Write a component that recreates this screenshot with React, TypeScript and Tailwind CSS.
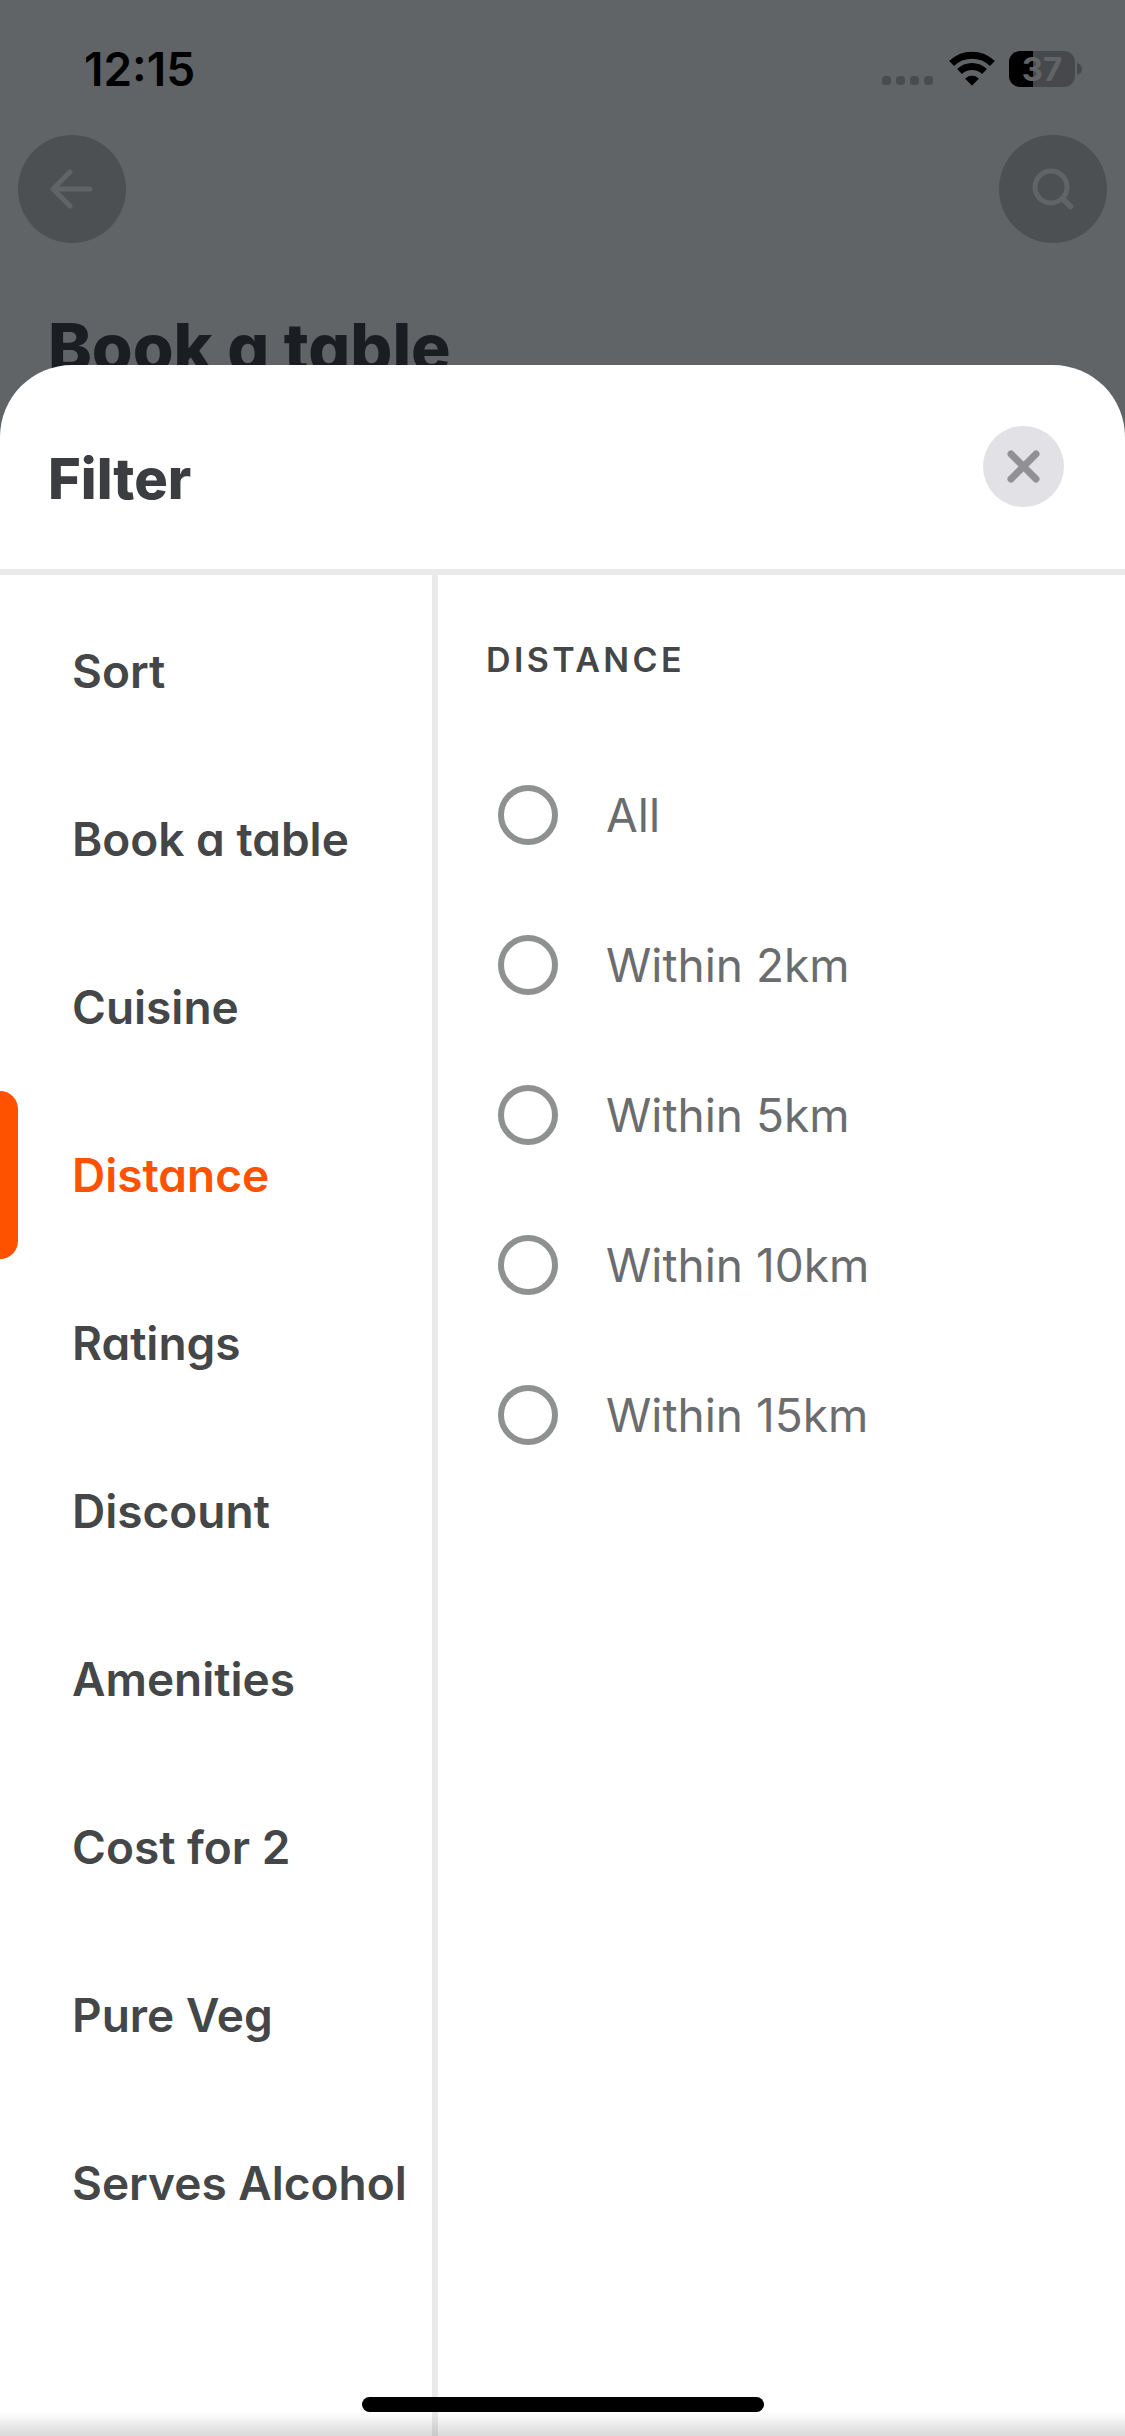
import { useState } from "react"
import clsx from "clsx"

const categories = [
  "Sort",
  "Book a table",
  "Cuisine",
  "Distance",
  "Ratings",
  "Discount",
  "Amenities",
  "Cost for 2",
  "Pure Veg",
  "Serves Alcohol",
]

const distances = ["All", "Within 2km", "Within 5km", "Within 10km", "Within 15km"]

const StatusBar = () => (
  <div className="flex items-start justify-between pt-10 pr-[43px] pl-[84px] text-black">
    <span className="text-[46px] leading-[58px] font-semibold">12:15</span>
    <div className="flex items-center pt-[11px]">
      <svg width="52" height="36" viewBox="0 0 52 36" fill="#494c4f" className="mr-[15px]">
        <rect x="0" y="25" width="9" height="9" rx="3.5" />
        <rect x="14" y="25" width="9" height="9" rx="3.5" />
        <rect x="28" y="25" width="9" height="9" rx="3.5" />
        <rect x="42" y="25" width="9" height="9" rx="3.5" />
      </svg>
      <svg width="46" height="36" viewBox="0 0 46 36" className="mr-[14px]">
        <g fill="none" stroke="#000" strokeWidth="7">
          <path d="M2.6 12.6a29 29 0 0 1 40.8 0" />
          <path d="M10.5 20.6a17.8 17.8 0 0 1 25 0" />
        </g>
        <path d="M23 34.2l-6.4-6.5a9.2 9.2 0 0 1 12.8 0z" stroke="#000" strokeWidth="1" strokeLinejoin="round" />
      </svg>
      <div className="mr-[2px] flex h-9 w-[66px] items-center justify-center rounded-[11px] bg-linear-to-r from-black from-36% to-[#47484b] to-36%">
        <span className="text-[33px] leading-9 font-bold text-[#606467]">37</span>
      </div>
      <svg width="5" height="12" viewBox="0 0 5 12" fill="#47484b">
        <path d="M0 0c3 1 5 3.200 5 6s-2 5-5 6z" />
      </svg>
    </div>
  </div>
)

const App = () => {
  const [active, setActive] = useState("Distance")
  const [distance, setDistance] = useState("")

  return (
    <main className="flex min-h-screen w-full flex-col bg-[#606467] font-[Inter,'Liberation_Sans',sans-serif] [font-feature-settings:'cv11']">
      <header>
        <StatusBar />
        <nav className="mt-[37px] flex justify-between px-[18px]">
          <button
            aria-label="Back"
            className="flex size-[108px] items-center justify-center rounded-full bg-[#4c5053]"
          >
            <svg width="44" height="42" viewBox="0 0 44 42" fill="none" stroke="#606467" strokeWidth="5" strokeLinecap="round" strokeLinejoin="round">
              <path d="M40 21H4M20 4L3 21l17 17" />
            </svg>
          </button>
          <button
            aria-label="Search"
            className="flex size-[108px] items-center justify-center rounded-full bg-[#4c5053]"
          >
            <svg width="42" height="42" viewBox="0 0 42 42" fill="none" stroke="#606467" strokeWidth="5" strokeLinecap="round">
              <circle cx="19" cy="19" r="16" />
              <path d="M31 31l7.500 7.500" strokeWidth="6" />
            </svg>
          </button>
        </nav>
        <h1 className="mt-[66px] px-12 text-[66px] leading-[76px] font-extrabold text-[#1a1e22]">
          Book a table
        </h1>
      </header>

      <section className="relative -mt-5 flex grow flex-col rounded-t-[72px] bg-white">
        <div className="flex items-start justify-between border-b-[6px] border-[#eaeaea] px-[61px] pt-[61px] pb-[55px] pl-12">
          <h2 className="pt-[18px] text-[56px] leading-[70px] font-extrabold text-[#3b3d40]">Filter</h2>
          <button
            aria-label="Close"
            className="flex size-[81px] items-center justify-center rounded-full bg-[#e2e2e6]"
          >
            <svg width="33" height="33" viewBox="0 0 33 33" stroke="#909095" strokeWidth="7" strokeLinecap="round">
              <path d="M4 4l25 25M29 4L4 29" />
            </svg>
          </button>
        </div>

        <div className="flex grow">
          <div className="flex w-[438px] shrink-0 flex-col border-r-[6px] border-[#eaeaea] pt-3">
            {categories.map((item) => (
              <button
                key={item}
                onClick={() => setActive(item)}
                className={clsx(
                  "flex h-[168px] items-center text-left text-[46px] leading-[56px] font-semibold whitespace-nowrap",
                  item === active ? "text-[#ff5200]" : "text-[#444648]"
                )}
              >
                <span
                  className={clsx(
                    "mr-[54px] h-full w-[18px] rounded-r-[18px]",
                    item === active && "bg-[#ff5200]"
                  )}
                />
                {item}
              </button>
            ))}
          </div>

          <fieldset className="grow pt-16 pl-12">
            <legend className="float-left w-full text-[34px] leading-[42px] font-semibold tracking-widest text-[#444648]">
              DISTANCE
            </legend>
            <div className="clear-both flex flex-col pt-[59px]">
              {distances.map((item) => (
                <label
                  key={item}
                  className="flex h-[150px] items-center gap-12 pl-3 text-[46px] leading-[56px] text-[#6b6c6e]"
                >
                  <input
                    type="radio"
                    name="distance"
                    value={item}
                    checked={distance === item}
                    onChange={() => setDistance(item)}
                    className="size-[60px] appearance-none rounded-full border-[6px] border-[#8f9090] checked:border-[18px] checked:border-[#ff5200]"
                  />
                  {item}
                </label>
              ))}
            </div>
          </fieldset>
        </div>

        <div className="pointer-events-none absolute inset-x-0 bottom-0 flex flex-col items-center">
          <div className="h-[15px] w-[402px] rounded-full bg-black" />
          <div className="h-6 w-full bg-linear-to-t from-black/15 to-transparent" />
        </div>
      </section>
    </main>
  )
}

export default App
